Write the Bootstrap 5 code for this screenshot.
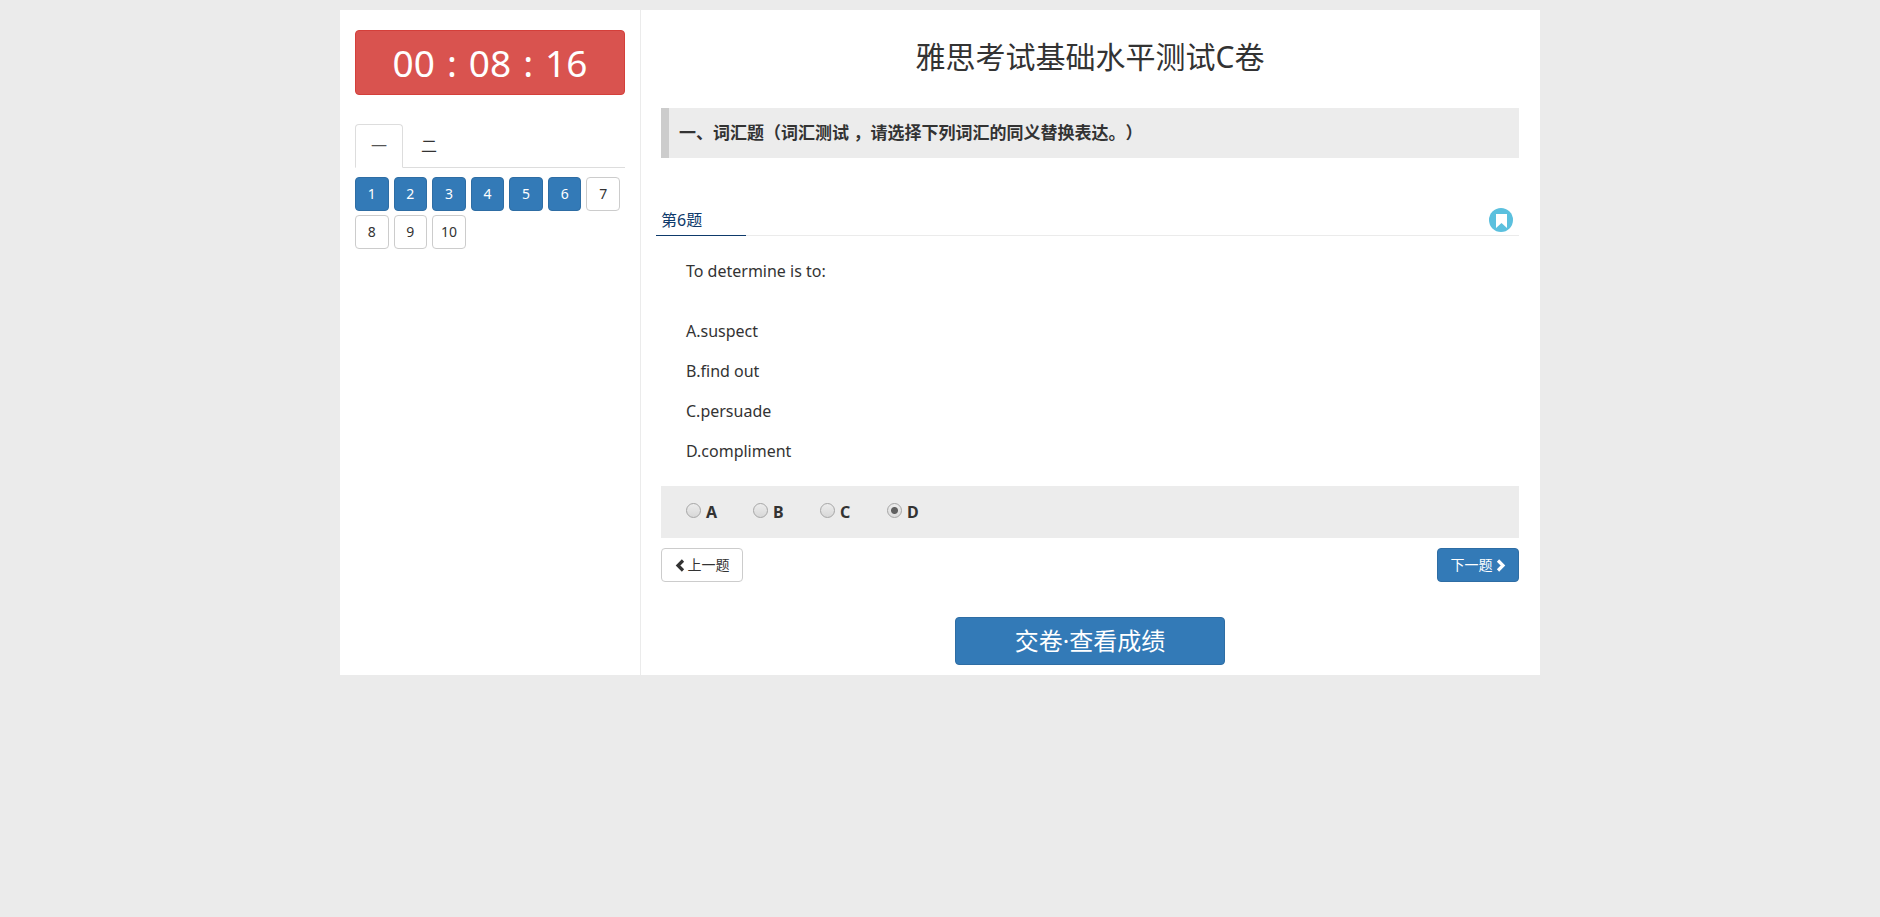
<!DOCTYPE html>
<html lang="zh-CN">
<head>
<meta charset="utf-8">
<meta name="viewport" content="width=device-width, initial-scale=1">
<title>雅思考试基础水平测试C卷</title>
<link href="https://cdn.jsdelivr.net/npm/bootstrap@5.3.0/dist/css/bootstrap.min.css" rel="stylesheet">
<style>
  body { background: #ebebeb; color: #333; font-family: "Noto Sans", "Noto Sans CJK SC", sans-serif; font-size: 16px; line-height: 24px; }
  .exam { max-width: 1200px; margin-top: 10px; }
  .exam-side { flex: 0 0 300px; padding: 20px 15px; }
  .exam-main { border-left: 1px solid #ebebeb; padding: 20px 21px 10px 20px; min-width: 0; }
  .timer { height: 65px; gap: 12px; background: #d9534f; border: 1px solid #d43f3a; border-radius: 4px; color: #fff; font-size: 37px; margin-bottom: 29px; }
  .part-tabs { --bs-nav-tabs-border-color: #ddd; gap: 2px; margin-bottom: 9px; }
  .part-tabs .nav-link { padding: 9px 15px; color: #333; border-radius: 4px 4px 0 0; }
  .part-tabs .nav-link.active { color: #555; border-color: #ddd #ddd #fff; }
  .sheet { display: grid; grid-template-columns: repeat(7, 1fr); gap: 4px 5px; padding-right: 5px; }
  .btn { border-radius: 4px; font-size: 14px; line-height: 20px; }
  .btn-line { --bs-btn-color: #333; --bs-btn-bg: #fff; --bs-btn-border-color: #ccc; --bs-btn-hover-bg: #e6e6e6; --bs-btn-hover-border-color: #adadad; }
  .btn-blue { --bs-btn-color: #fff; --bs-btn-bg: #337ab7; --bs-btn-border-color: #2e6da4; --bs-btn-hover-color: #fff; --bs-btn-hover-bg: #286090; --bs-btn-hover-border-color: #204d74; }
  .sheet .btn { padding: 6px 0; }
  .exam-title { font-size: 30px; line-height: 54px; margin-bottom: 24px; font-weight: 400; }
  .part-title { background: #ececec; border-left: 8px solid #ccc; padding: 13px 10px; font-size: 17px; line-height: 24px; font-weight: 700; margin-bottom: 50px; text-spacing-trim: space-all; }
  .q-head { border-bottom: 1px solid #ebebeb; height: 28px; margin-left: -5px; }
  .q-no { width: 90px; height: 28px; padding-left: 5px; color: #0e3a6b; line-height: 24px; border-bottom: 1px solid #0e3a6b; }
  .mark-btn { width: 24px; height: 24px; margin-right: 6px; }
  .q-body { padding: 23px 25px; }
  .q-body p { margin-bottom: 16px; }
  .q-body .stem { margin-bottom: 36px; }
  .answers { background: #ececec; height: 52px; padding: 0 25px; gap: 35px; margin-bottom: 10px; }
  .answers label { width: 32px; gap: 5px; font-weight: 700; }
  .answers input { appearance: none; flex: none; width: 15px; height: 15px; margin: 0 0 3px; border: 1px solid #a6a6a6; border-radius: 50%; background: linear-gradient(#ececec, #d8d8d8); }
  .answers input:checked { background: radial-gradient(circle, #606060 3px, transparent 4px), linear-gradient(#ececec, #dcdcdc); }
  .step { width: 82px; padding: 6px 0; gap: 3px; }
  .submit { width: 270px; height: 48px; font-size: 24px; margin-top: 35px; }
</style>
</head>
<body>
<div class="exam container-fluid p-0 d-flex bg-white">
  <aside class="exam-side">
    <div class="timer d-flex align-items-center justify-content-center" role="timer">
      <span>00</span><span>:</span><span>08</span><span>:</span><span>16</span>
    </div>
    <ul class="nav nav-tabs part-tabs">
      <li class="nav-item"><a class="nav-link active" href="#part1">一</a></li>
      <li class="nav-item"><a class="nav-link" href="#part2">二</a></li>
    </ul>
    <div class="sheet">
      <button type="button" class="btn btn-blue">1</button>
      <button type="button" class="btn btn-blue">2</button>
      <button type="button" class="btn btn-blue">3</button>
      <button type="button" class="btn btn-blue">4</button>
      <button type="button" class="btn btn-blue">5</button>
      <button type="button" class="btn btn-blue">6</button>
      <button type="button" class="btn btn-line">7</button>
      <button type="button" class="btn btn-line">8</button>
      <button type="button" class="btn btn-line">9</button>
      <button type="button" class="btn btn-line">10</button>
    </div>
  </aside>
  <main class="exam-main flex-grow-1">
    <h1 class="exam-title text-center">雅思考试基础水平测试C卷</h1>
    <h2 class="part-title" id="part1">一、词汇题（词汇测试 ，请选择下列词汇的同义替换表达。）</h2>
    <div class="q-head d-flex justify-content-between">
      <div class="q-no">第6题</div>
      <button type="button" class="mark-btn btn border-0 p-0 d-flex" aria-label="标记">
        <svg width="24" height="24" viewBox="0 0 24 24"><circle cx="12" cy="12" r="12" fill="#5bc0de"/><path d="M7 6h11v14l-5.500-5L7 20z" fill="#fff"/></svg>
      </button>
    </div>
    <div class="q-body">
      <p class="stem">To determine is to:</p>
      <p>A.suspect</p>
      <p>B.find out</p>
      <p>C.persuade</p>
      <p class="mb-0">D.compliment</p>
    </div>
    <div class="answers d-flex align-items-center">
      <label class="d-flex align-items-center"><input type="radio" name="answer" value="A">A</label>
      <label class="d-flex align-items-center"><input type="radio" name="answer" value="B">B</label>
      <label class="d-flex align-items-center"><input type="radio" name="answer" value="C">C</label>
      <label class="d-flex align-items-center"><input type="radio" name="answer" value="D" checked>D</label>
    </div>
    <div class="d-flex justify-content-between">
      <button type="button" class="btn btn-line step d-flex align-items-center justify-content-center"><svg width="10" height="13" viewBox="0 0 10 13"><path d="M8 1.500 3 6.500l5 5" fill="none" stroke="currentColor" stroke-width="3.200"/></svg>上一题</button>
      <button type="button" class="btn btn-blue step d-flex align-items-center justify-content-center">下一题<svg width="10" height="13" viewBox="0 0 10 13"><path d="m2 1.500 5 5-5 5" fill="none" stroke="currentColor" stroke-width="3.200"/></svg></button>
    </div>
    <div class="text-center"><button type="submit" class="btn btn-blue submit">交卷·查看成绩</button></div>
  </main>
</div>
<script src="https://cdn.jsdelivr.net/npm/bootstrap@5.3.0/dist/js/bootstrap.bundle.min.js"></script>
</body>
</html>
